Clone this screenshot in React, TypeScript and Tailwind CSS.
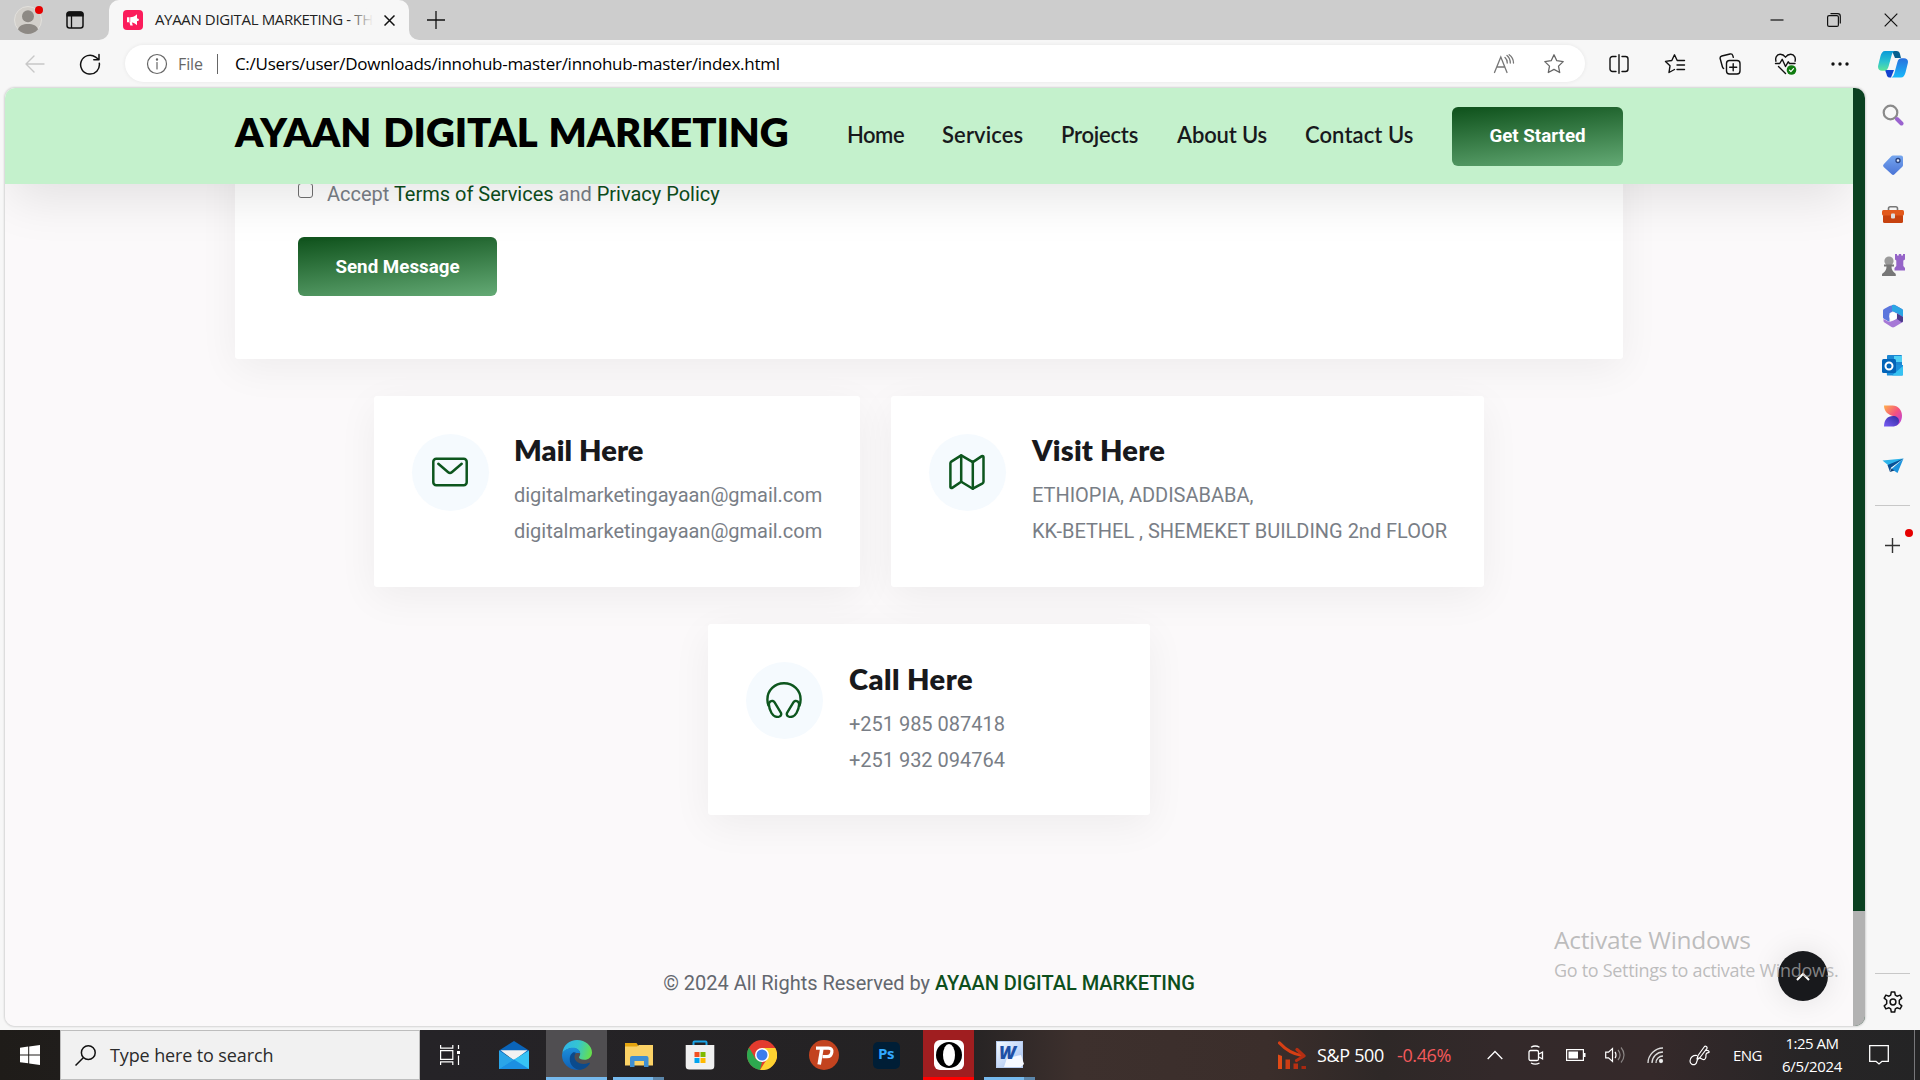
import type { ReactNode } from 'react';

function AvatarIcon() {
  return (
    <svg width="28" height="28" viewBox="0 0 28 28">
      <circle cx="14" cy="14" r="13.5" fill="#d2cfca" stroke="#e2e0dc" />
      <circle cx="14" cy="10.3" r="6" fill="#8d8984" />
      <path d="M4 23.5C5 19.5 9 18 14 18s9 1.500 10 5.500A14 14 0 0 1 14 28 14 14 0 0 1 4 23.500Z" fill="#8d8984" />
    </svg>
  );
}

function TabActionsIcon() {
  return (
    <svg width="20" height="20" viewBox="0 0 20 20">
      <rect x="2" y="2" width="16" height="16" rx="2.500" fill="none" stroke="#111" strokeWidth="1.500" />
      <path d="M1.500 6.500V4.500a3 3 0 0 1 3-3h11a3 3 0 0 1 3 3v2Z" fill="#111" />
      <path d="M6.500 6v12" stroke="#111" strokeWidth="1.300" />
    </svg>
  );
}

function FaviconIcon() {
  return (
    <svg width="20" height="20" viewBox="0 0 20 20">
      <rect width="20" height="20" rx="4" fill="#fb1c5b" />
      <path d="M4 7.200h2.500v5H4ZM7.200 7.200c2.800 0 4.800-1.200 6.800-3v4.200c1.500 0 1.900.6 1.900 1.300s-.4 1.300-1.900 1.300v4.200c-2-1.800-4-3-6.800-3Z" fill="#fff" />
      <path d="M6.500 12h2.300l1 3.500H7.300Z" fill="#fff" />
    </svg>
  );
}

function BackIcon() {
  return (
    <svg width="22" height="20" viewBox="0 0 22 20" fill="none" stroke="#c8c8c8" strokeWidth="1.400" strokeLinecap="round" strokeLinejoin="round">
      <path d="M20 10H2M10 2 2 10l8 8" />
    </svg>
  );
}

function ReloadIcon() {
  return (
    <svg width="22" height="22" viewBox="0 0 22 22" fill="none" stroke="#111" strokeWidth="1.500" strokeLinecap="round" strokeLinejoin="round">
      <path d="M20.300 10.200A9.400 9.400 0 1 1 16.600 4.100L19.800 6.500M20 1.500v5.200h-5.200" />
    </svg>
  );
}

function InfoIcon() {
  return (
    <svg width="22" height="22" viewBox="0 0 22 22" fill="none" stroke="#666" strokeWidth="1.200">
      <circle cx="11" cy="11" r="9.500" />
      <path d="M11 9.500v6.500" strokeLinecap="round" />
      <circle cx="11" cy="6.500" r=".6" fill="#666" />
    </svg>
  );
}

function ReadAloudIcon() {
  return (
    <svg width="22" height="20" viewBox="0 0 22 20" fill="none" stroke="#777" strokeWidth="1.300" strokeLinecap="round">
      <path d="M1.500 18.500 7.800 3l6.200 15.500M3.700 13h8.200M12 3.500a7 7 0 0 1 2.200 5.500M14 1.500c2.200 1.800 3.300 4.300 3.300 7.500M16.200.7C19 2.700 20.500 5.800 20.500 9" />
    </svg>
  );
}

const STAR = 'm11 1.800 2.800 5.900 6.400.9-4.700 4.500 1.200 6.400L11 16.400l-5.700 3.100 1.200-6.400L1.800 8.600l6.400-.9Z';

function StarIcon() {
  return (
    <svg width="22" height="22" viewBox="0 0 22 22" fill="none" stroke="#666" strokeWidth="1.300" strokeLinejoin="round">
      <path d={STAR} />
    </svg>
  );
}

function SplitIcon() {
  return (
    <svg width="20" height="20" viewBox="0 0 20 20" fill="none" stroke="#111" strokeWidth="1.400" strokeLinecap="round">
      <path d="M10 .7v18.600M7 2.500H3.500A2.500 2.500 0 0 0 1 5v10a2.500 2.500 0 0 0 2.500 2.500H7M13 2.500h3.500A2.500 2.500 0 0 1 19 5v10a2.500 2.500 0 0 1-2.500 2.500H13" />
    </svg>
  );
}

function FavoritesIcon() {
  return (
    <svg width="22" height="22" viewBox="0 0 22 22" fill="none" stroke="#111" strokeWidth="1.400" strokeLinecap="round" strokeLinejoin="round">
      <path d="M13.200 7.500 10.500 1.800 7.800 7.500l-6.300.9L6 12.800 5 19.500l5.500-3M13 12h7.500M13 16.500h7.500M13.200 7.500h7.300" />
    </svg>
  );
}

function CollectionsIcon() {
  return (
    <svg width="22" height="22" viewBox="0 0 22 22" fill="none" stroke="#111" strokeWidth="1.400" strokeLinecap="round" strokeLinejoin="round">
      <rect x="7.500" y="7.500" width="13.500" height="13.500" rx="3" />
      <path d="M14.200 10.700v7M10.700 14.200h7M4.600 15.500A3 3 0 0 1 3.400 13.800L1.200 5.800A2.300 2.300 0 0 1 2.800 3L11 1a2.300 2.300 0 0 1 2.800 1.600l.5 1.700" />
    </svg>
  );
}

function HealthIcon() {
  return (
    <svg width="24" height="24" viewBox="0 0 24 24" fill="none" stroke="#111" strokeWidth="1.400" strokeLinecap="round" strokeLinejoin="round">
      <path d="M2 9.200C1 6 2.500 2.300 6.300 2.300c2.700 0 4 1.300 5.200 2.900 1.200-1.600 2.500-2.900 5.200-2.900C20.500 2.300 22 6 21 9.200M4.500 14.500l7 7" />
      <path d="M1.500 11.500h4.200l2.500-4.200 3.300 7.200 2.700-4.700 1.300 1.700h5.500" />
      <circle cx="17.500" cy="18" r="4.800" fill="#107c10" stroke="none" />
      <path d="m15.500 18.200 1.400 1.400 2.600-3" stroke="#fff" strokeWidth="1.200" />
    </svg>
  );
}

function CopilotIcon() {
  return (
    <svg width="30" height="27" viewBox="0 0 30 27">
      <defs>
        <linearGradient id="cpA" x1="0" y1="0" x2="0" y2="1"><stop stopColor="#0a9ad8" /><stop offset=".55" stopColor="#2cc3d0" /><stop offset="1" stopColor="#5ee59a" /></linearGradient>
        <linearGradient id="cpB" x1="0" y1="0" x2="0" y2="1"><stop stopColor="#2870dd" /><stop offset="1" stopColor="#19b9fa" /></linearGradient>
      </defs>
      <path d="M14 0h4.500c2 0 3 1.200 3.500 3l1 4h-6Z" fill="#08618f" />
      <path d="M7 19h9l-3 7.500h-1.500C9.500 26.500 9 25 8.500 23Z" fill="#1243cf" />
      <path d="M7 0h9.500c-1.500.7-2.200 2-2.800 4l-3 11c-.8 3-2 4.800-4.500 4.800H4c-3 0-4.500-2.300-3.800-5.300L2.500 5C3.300 2 4.800 0 7 0Z" fill="url(#cpA)" />
      <path d="M23 26.500h-9.500c1.500-.7 2.200-2 2.800-4l3-11c.8-3 2-4.300 4.500-4.300H26c3 0 4.500 2 3.800 5L27.500 21.500c-.8 3-2.300 5-4.500 5Z" fill="url(#cpB)" />
    </svg>
  );
}

function SearchSide() {
  return (
    <svg width="22" height="22" viewBox="0 0 22 22" fill="none">
      <circle cx="8.500" cy="8.500" r="6.800" stroke="#8a8a8a" strokeWidth="2.200" />
      <path d="m15 15 4.500 4.500" stroke="#9a63cf" strokeWidth="4" strokeLinecap="round" />
    </svg>
  );
}

function TagSide() {
  return (
    <svg width="22" height="22" viewBox="0 0 22 22">
      <defs><linearGradient id="tg" x1="0" y1="0" x2="0" y2="1"><stop stopColor="#76a6ef" /><stop offset="1" stopColor="#4a74d6" /></linearGradient></defs>
      <path d="M11 1.500h8a2 2 0 0 1 2 2V11c0 .7-.2 1.200-.7 1.700l-7.800 7.600a2 2 0 0 1-2.800 0L1.700 13a2 2 0 0 1 0-2.800l7.600-8c.5-.5 1-.7 1.700-.7Z" fill="url(#tg)" />
      <circle cx="16" cy="6.500" r="2" fill="#dfe9fb" stroke="#29437f" strokeWidth="1.300" />
    </svg>
  );
}

function BriefcaseSide() {
  return (
    <svg width="22" height="20" viewBox="0 0 22 20">
      <path d="M6.500 6V3.500A1.800 1.800 0 0 1 8.300 1.700h5.400a1.800 1.800 0 0 1 1.800 1.800V6" fill="none" stroke="#777" strokeWidth="1.600" />
      <rect x="1" y="9" width="20" height="9" rx="1.500" fill="#c7420f" />
      <rect x="0" y="5" width="22" height="5.500" rx="1.500" fill="#e2591c" />
      <rect x="9" y="8.500" width="4" height="5" rx="1" fill="#ddd" />
    </svg>
  );
}

function GamesSide() {
  return (
    <svg width="24" height="24" viewBox="0 0 24 24">
      <path d="M14 1h2v1.500h1.800V1h2.400v1.500H22V1h2v5.500l-1.700 1V13l1.700 2v2.500H13.500V15l1.800-2V7.500L14 6.500Z" fill="#9564c8" />
      <circle cx="8" cy="8" r="4.600" fill="#9a9a9a" />
      <path d="M3 11.500h10v2h-2.500c0 2.800 1 4.800 3 6.200a2 2 0 0 1 1.300 1.800V23H1v-1.500a2 2 0 0 1 1.500-1.800c2-1.400 3-3.400 3-6.200H3Z" fill="#777" />
    </svg>
  );
}

function M365Side() {
  return (
    <svg width="22" height="24" viewBox="0 0 22 24">
      <path d="M7.500 2 12 .8c.7 0 1 .2 1.500.5L20 5c.8.500 1 1 1 1.800V13l-6-3.500-4-2.200-3.500 2V18L2.300 15C1.300 14.500 1 14 1 13V7c0-1 .2-1.500 1-2Z" fill="#5b76dd" />
      <path d="M10 1 12 .8 20 5c.8.500 1 1 1 1.800V13l-6-4-5-2Z" fill="#2ba6e4" />
      <path d="M1.500 15 7 18l4-1.200 4-2.300V9.500l6 3.500v3.500c0 1-.3 1.500-1 2l-7.500 4.500a3 3 0 0 1-3 0L2.500 18.500a2 2 0 0 1-1-1.500Z" fill="#a678d6" />
      <path d="M15 9.500 21 13v3.500c0 1-.3 1.500-1 2L15 15Z" fill="#4d3b8c" />
      <circle cx="11" cy="12.300" r="3.600" fill="#fff" />
    </svg>
  );
}

function OutlookSide() {
  return (
    <svg width="21" height="21" viewBox="0 0 21 21">
      <rect x="5" y="0" width="15" height="12" rx="1" fill="#1b87d2" />
      <rect x="12" y="1" width="8" height="6" fill="#4fd0f5" />
      <path d="M4 10h17v9.500a1 1 0 0 1-1 1H5Z" fill="#1a8fdb" />
      <path d="m21 11-11 9.500h10a1 1 0 0 0 1-1Z" fill="#36c2f2" />
      <rect x="0" y="4" width="14" height="14" rx="1.500" fill="#0364b8" />
      <circle cx="7" cy="11" r="3.500" fill="none" stroke="#fff" strokeWidth="2" />
    </svg>
  );
}

function DesignerSide() {
  return (
    <svg width="20" height="22" viewBox="0 0 20 22">
      <defs>
        <linearGradient id="dgA" x1="0" y1="0" x2="1" y2="1"><stop stopColor="#ffb04a" /><stop offset=".5" stopColor="#f4527f" /><stop offset="1" stopColor="#b03df0" /></linearGradient>
        <linearGradient id="dgB" x1="0" y1="1" x2="1" y2="0"><stop stopColor="#7a5cf5" /><stop offset="1" stopColor="#2f2aa0" /></linearGradient>
      </defs>
      <path d="M1 .5h8.500C15 .5 19 5 19 10.700S15.500 21 11 21L10 11C5.500 10 1 6.500 1 .5Z" fill="url(#dgA)" />
      <path d="M1 21.500C1 15 4.500 11 10 11c3.500 0 6 2 6 5s-2.500 5.500-6.500 5.500Z" fill="url(#dgB)" />
    </svg>
  );
}

function PlaneSide() {
  return (
    <svg width="22" height="16" viewBox="0 0 22 16">
      <path d="M.5 2.500 21.500.5 9 9.500Z" fill="#2cb3ea" />
      <path d="M21.500.5 15.500 15l-6-4Z" fill="#1c93dd" />
      <path d="m5.500 7 16-6.500L9 9.500l-1 4.500Z" fill="#0b4f93" />
      <path d="m8 14 1.500-3.500 3 2Z" fill="#0a3f78" />
    </svg>
  );
}

function GearIcon() {
  return (
    <svg width="22" height="22" viewBox="0 0 22 22" fill="none" stroke="#111" strokeWidth="1.500" strokeLinejoin="round">
      <path d="M9.300 1h3.400l.6 3.200 1.700 1 3.100-1.100 1.700 3-2.500 2.100v3.600l2.500 2.100-1.700 3-3.100-1.100-1.700 1-.6 3.200H9.300l-.6-3.200-1.700-1-3.100 1.100-1.700-3 2.500-2.100V9.200L2.200 7.100l1.700-3L7 5.200l1.700-1Z" />
      <circle cx="11" cy="11" r="2.900" />
    </svg>
  );
}

function SideSlot({ children }: { children: ReactNode }) {
  return <div className="flex h-[50.15px] items-center justify-center">{children}</div>;
}

function Sidebar() {
  return (
    <aside className="flex w-[55px] shrink-0 flex-col pt-[2px] pb-[17px]">
      <SideSlot><SearchSide /></SideSlot>
      <SideSlot><TagSide /></SideSlot>
      <SideSlot><BriefcaseSide /></SideSlot>
      <SideSlot><GamesSide /></SideSlot>
      <SideSlot><M365Side /></SideSlot>
      <SideSlot><OutlookSide /></SideSlot>
      <SideSlot><DesignerSide /></SideSlot>
      <SideSlot><PlaneSide /></SideSlot>
      <div className="mx-auto mt-[14px] h-px w-[35px] bg-[#c8c8c8]" />
      <div className="relative mx-auto mt-[32px]">
        <svg width="15" height="15" viewBox="0 0 15 15" stroke="#333" strokeWidth="1.400"><path d="M7.500 0v15M0 7.500h15" /></svg>
        <span className="absolute -top-[9px] left-[20px] size-2 rounded-full bg-[#e60000]" />
      </div>
      <div className="mx-auto mt-auto h-px w-[35px] bg-[#c8c8c8]" />
      <div className="mt-[17px] flex justify-center"><GearIcon /></div>
    </aside>
  );
}

function TabStrip() {
  return (
    <div className="flex h-10 shrink-0 items-center bg-[#cdcdcd]">
      <div className="relative ml-[14px] size-7">
        <AvatarIcon />
        <span className="absolute top-0 left-[21px] size-2 rounded-full bg-[#e60000]" />
      </div>
      <div className="ml-[23px]"><TabActionsIcon /></div>
      <div className="relative ml-[24px] flex h-10 w-[300px] items-center rounded-t-[10px] bg-[#f7f7f7] pl-[14px]">
        <svg className="absolute bottom-0 -left-[10px]" width="10" height="10" viewBox="0 0 10 10"><path d="M10 0v10H0A10 10 0 0 0 10 0Z" fill="#f7f7f7" /></svg>
        <svg className="absolute -right-[10px] bottom-0" width="10" height="10" viewBox="0 0 10 10"><path d="M0 0v10h10A10 10 0 0 1 0 0Z" fill="#f7f7f7" /></svg>
        <FaviconIcon />
        <div className="relative -mt-[2px] ml-[12px] w-[218px] text-[15px] tracking-[-0.36px] whitespace-nowrap text-[#222]">
          AYAAN DIGITAL MARKETING - TH
          <span className="absolute inset-y-0 right-0 w-[26px] bg-linear-to-r from-transparent to-[#f7f7f7]" />
        </div>
        <svg className="ml-[11px]" width="11" height="11" viewBox="0 0 11 11" stroke="#111" strokeWidth="1.500"><path d="m.5.5 10 10M10.500.5l-10 10" /></svg>
      </div>
      <svg className="ml-[18px]" width="18" height="18" viewBox="0 0 18 18" stroke="#111" strokeWidth="1.300"><path d="M9 0v18M0 9h18" /></svg>
      <div className="mr-[22px] ml-auto flex items-center gap-[43px]">
        <svg width="14" height="14" viewBox="0 0 14 14"><path d="M.5 7h13" stroke="#111" strokeWidth="1.200" /></svg>
        <svg width="14" height="14" viewBox="0 0 14 14" fill="none" stroke="#111" strokeWidth="1.200"><rect x=".6" y="2.600" width="10.800" height="10.800" rx="1.500" /><path d="M3.500.7h7.200a2.600 2.600 0 0 1 2.600 2.600v7.200" /></svg>
        <svg width="14" height="14" viewBox="0 0 14 14"><path d="m.7.700 12.600 12.600M13.300.7.7 13.300" stroke="#111" strokeWidth="1.200" /></svg>
      </div>
    </div>
  );
}

function Toolbar() {
  return (
    <div className="flex h-12 shrink-0 items-center">
      <div className="ml-[24px]"><BackIcon /></div>
      <div className="ml-[33px]"><ReloadIcon /></div>
      <div className="-mt-px ml-[24px] flex h-[37px] w-[1460px] items-center rounded-full bg-white pl-[21px] shadow-[0_0_4px_rgba(0,0,0,0.07)]">
        <InfoIcon />
        <span className="ml-[10px] text-[16px] tracking-[-0.1px] text-[#666]">File</span>
        <span className="ml-[14px] h-5 w-px bg-[#666]" />
        <span className="ml-[17px] text-[17px] tracking-[-0.265px] whitespace-nowrap text-black">C:/Users/user/Downloads/innohub-master/innohub-master/index.html</span>
        <div className="mr-[20px] ml-auto flex items-center gap-[28px]"><ReadAloudIcon /><StarIcon /></div>
      </div>
      <div className="ml-[24px] flex flex-1 items-center">
        <SplitIcon />
        <div className="ml-[35px]"><FavoritesIcon /></div>
        <div className="ml-[33px]"><CollectionsIcon /></div>
        <div className="ml-[33px]"><HealthIcon /></div>
        <svg className="ml-[33px]" width="18" height="4" viewBox="0 0 18 4" fill="#111"><circle cx="2" cy="2" r="1.700" /><circle cx="9" cy="2" r="1.700" /><circle cx="16" cy="2" r="1.700" /></svg>
        <div className="ml-[29px]"><CopilotIcon /></div>
      </div>
    </div>
  );
}

function SiteHeader() {
  return (
    <header className="relative z-10 flex h-24 items-center bg-[#c4f1cc] pl-[230px] shadow-[0_20px_50px_-6px_rgba(10,5,10,0.1)]">
      <h1 className="-mt-[9px] w-[552px] text-[40px] leading-[48px] font-extrabold tracking-[-0.13px] whitespace-nowrap text-black [word-spacing:3px]">AYAAN DIGITAL MARKETING</h1>
      <nav className="-mt-[3px] ml-[60px] flex text-[22px] leading-7 font-semibold whitespace-nowrap text-[#18191c]">
        <a className="w-[95px] tracking-[-0.5px]">Home</a>
        <a className="w-[119px] tracking-[0.12px]">Services</a>
        <a className="w-[116px] tracking-[-0.23px]">Projects</a>
        <a className="w-[128px] tracking-[-0.16px]">About Us</a>
        <a className="w-[147px] tracking-[0.08px]">Contact Us</a>
      </nav>
      <GreenButton className="w-[171px]">Get Started</GreenButton>
    </header>
  );
}

function GreenButton({ className, children }: { className: string; children: ReactNode }) {
  return (
    <button className={`flex h-[59px] items-center justify-center rounded-md bg-[linear-gradient(174deg,#12551f_5%,#62a873_98%)] font-['Roboto',sans-serif] text-[18.75px] font-bold whitespace-nowrap text-white ${className}`}>
      {children}
    </button>
  );
}

function MailIcon() {
  return (
    <svg className="-mt-px -ml-px" width="36" height="36" viewBox="0 0 36 36" fill="none" stroke="#0d561e" strokeWidth="2.500" strokeLinecap="round" strokeLinejoin="round">
      <rect x="1.300" y="4.800" width="33.400" height="26.400" rx="3" />
      <path d="m6.300 9.800 9.900 8.400a2.800 2.800 0 0 0 3.600 0l9.900-8.400" />
    </svg>
  );
}

function MapIcon() {
  return (
    <svg className="-mt-px -ml-px" width="36" height="36" viewBox="0 0 36 36" fill="none" stroke="#0d561e" strokeWidth="2.500" strokeLinecap="round" strokeLinejoin="round">
      <path d="M1.400 9.300a2 2 0 0 1 .9-1.700L12.200 1.400l11.600 6.700L32.800 2.100c.8-.5 1.700 0 1.700.9v24.700a2 2 0 0 1-.9 1.600L23.800 34.700 12.200 27.800 3.200 33.900c-.8.500-1.800 0-1.800-.9Z" />
      <path d="M12.200 1.400v26.400M23.800 8.100v26.600" />
    </svg>
  );
}

function HeadphonesIcon() {
  return (
    <svg className="-mt-px -ml-[2px]" width="36" height="36" viewBox="0 0 36 36" fill="none" stroke="#0d561e" strokeWidth="2.400" strokeLinecap="round" strokeLinejoin="round">
      <path d="M2.500 23.500A17 17 0 0 1 1.400 17.500C1.400 8.300 8.700 1.300 18 1.300s16.600 7 16.600 16.200c0 2-.4 4-1.100 6" />
      <path d="M4.400 19.400c1.600-1 3.300-.5 4.200 1l6.200 10.200c.9 1.500.3 3.200-1.300 3.900-3 1.200-6.200-.4-8-3.500-1.700-2.900-2.500-5.500-2.600-8.500 0-1.300.5-2.500 1.500-3.100ZM31.600 19.400c-1.600-1-3.300-.5-4.200 1l-6.200 10.200c-.9 1.500-.3 3.200 1.300 3.900 3 1.200 6.200-.4 8-3.500 1.700-2.900 2.500-5.500 2.600-8.500 0-1.300-.5-2.500-1.500-3.100Z" />
    </svg>
  );
}

interface ContactCardProps {
  icon: ReactNode;
  title: string;
  lines: string[];
  className: string;
  bodyClassName: string;
}

function ContactCard({ icon, title, lines, className, bodyClassName }: ContactCardProps) {
  return (
    <div className={`flex h-[191px] rounded-[3px] bg-white pt-[38px] pl-[38px] shadow-[0_10px_40px_rgba(10,5,10,0.055)] ${className}`}>
      <div className="flex size-[77px] shrink-0 items-center justify-center rounded-full bg-[#f5fafe]">{icon}</div>
      <div className={bodyClassName}>
        <h3 className="text-[29px] leading-9 font-extrabold whitespace-nowrap text-[#18191c]">{title}</h3>
        <div className="mt-[9px] font-['Roboto',sans-serif] text-[20px] leading-9 tracking-[-0.02px] whitespace-nowrap text-[#797e86]">
          {lines.map((line, i) => <p key={i}>{line}</p>)}
        </div>
      </div>
    </div>
  );
}

function Page() {
  return (
    <div className="relative flex min-w-0 flex-1 flex-col overflow-hidden bg-[#fbf9fa] font-['Lato',sans-serif]">
      <SiteHeader />
      <main className="flex flex-col">
        <section className="-mt-10 ml-[230px] flex h-[215px] w-[1388px] flex-col items-start rounded-[3px] bg-white pt-[32px] pl-[63px] shadow-[0_10px_40px_rgba(10,5,10,0.055)]">
          <div className="flex">
            <span className="mt-[7px] size-[15px] rounded-[3px] border border-[#707070] bg-white" />
            <p className="ml-[14px] font-['Roboto',sans-serif] text-[20px] leading-9 tracking-[-0.01px] text-[#797e86]">
              Accept <span className="text-[#0d4f1c]">Terms of Services</span> and <span className="text-[#0d4f1c]">Privacy Policy</span>
            </p>
          </div>
          <GreenButton className="mt-[25px] w-[199px] pt-px">Send Message</GreenButton>
        </section>
        <div className="mt-[37px] ml-[369px] flex gap-[31px]">
          <ContactCard className="w-[486px]" bodyClassName="-mt-[2px] ml-[25px] [&_h3]:tracking-[0.1px]" icon={<MailIcon />} title="Mail Here" lines={['digitalmarketingayaan@gmail.com', 'digitalmarketingayaan@gmail.com']} />
          <ContactCard className="w-[593px]" bodyClassName="-mt-[2px] ml-[26px] [&_h3]:tracking-[0.2px]" icon={<MapIcon />} title="Visit Here" lines={['ETHIOPIA, ADDISABABA,', 'KK-BETHEL , SHEMEKET BUILDING 2nd FLOOR']} />
        </div>
        <ContactCard className="mt-[37px] ml-[703px] w-[442px]" bodyClassName="-mt-px ml-[26px] [&_h3]:tracking-[0.45px]" icon={<HeadphonesIcon />} title="Call Here" lines={['+251 985 087418', '+251 932 094764']} />
      </main>
      <footer className="mt-[150px] text-center font-['Roboto',sans-serif] text-[20px] leading-9 tracking-[-0.02px] text-[#63676e]">
        © 2024 All Rights Reserved by <span className="font-medium text-[#0d4f1c]">AYAAN DIGITAL MARKETING</span>
      </footer>
      <div className="absolute right-[25px] bottom-[25px] flex size-[50px] items-center justify-center rounded-full bg-[#18191c] shadow-[0_0_30px_rgba(0,0,0,0.1)]">
        <svg width="14" height="9" viewBox="0 0 14 9" fill="none" stroke="#fff" strokeWidth="2"><path d="m1 8 6-6 6 6" /></svg>
      </div>
      <div className="absolute top-[834px] left-[1549px] font-['Open_Sans','Noto_Sans',sans-serif] whitespace-nowrap text-[#a8a8a8]/75">
        <p className="text-[24.5px] leading-9 tracking-[-0.28px]">Activate Windows</p>
        <p className="text-[18px] leading-[24px] tracking-[-0.3px]">Go to Settings to activate Windows.</p>
      </div>
    </div>
  );
}

function TaskSlot({ children, className }: { children: ReactNode; className: string }) {
  return <div className={`flex h-full shrink-0 items-center justify-center ${className}`}>{children}</div>;
}

function Underline({ split }: { split?: boolean }) {
  return (
    <span className="absolute inset-x-0 bottom-0 flex h-[3px] bg-[#76b9ed]">
      {split && <span className="ml-auto w-[11px] bg-[#5b86aa]" />}
    </span>
  );
}

function Taskbar() {
  return (
    <div className="flex h-[50px] shrink-0 items-center bg-[linear-gradient(90deg,#1f1c19_0%,#252327_22%,#242223_50%,#3d302d_56%,#3b2e2b_66%,#2e2827_72%,#33292a_78%,#35292a_86%,#272526_94%,#242425_100%)]">
      <TaskSlot className="w-[60px]">
        <svg width="20" height="20" viewBox="0 0 20 20" fill="#fff"><path d="M0 2.700 8.200 1.600v7.800H0ZM9.200 1.500 20 0v9.400H9.200ZM0 10.400h8.200v7.900L0 17.200ZM9.200 10.400H20v9.600l-10.800-1.500Z" /></svg>
      </TaskSlot>
      <div className="flex h-full w-[360px] shrink-0 items-center border border-[#bdbdbd] bg-[#f1f1f1] pl-[14px]">
        <svg width="21" height="21" viewBox="0 0 21 21" fill="none" stroke="#111" strokeWidth="1.500"><circle cx="13.300" cy="7.700" r="6.900" /><path d="M8.300 12.700.5 20.500" /></svg>
        <span className="ml-[14px] text-[18px] tracking-[-0.12px] text-[#2b2b2b]">Type here to search</span>
      </div>
      <TaskSlot className="w-[61px]">
        <svg width="21" height="20" viewBox="0 0 21 20" fill="none" stroke="#fff" strokeWidth="1.200"><path d="M.6 0v3.200h12.200V0M.6 20v-3.200h12.200V20M.6 5.600h12.200v8.800H.6ZM18.500 0v4M18.500 10.500V20" /><path d="M17 6h3v3h-3Z" fill="#fff" stroke="none" /></svg>
      </TaskSlot>
      <TaskSlot className="w-[65px]">
        <svg width="30" height="28" viewBox="0 0 30 28"><path d="M0 9.500 15 0l15 9.500v4H0Z" fill="#0a64b8" /><path d="M1.500 9.200h27L15 19.500Z" fill="#f2f2f2" /><path d="M0 9.500 15 19v9H0Z" fill="#2aa5e8" /><path d="m30 9.500-15 9L0 28h30Z" fill="#36c3f5" /><path d="M0 28 15 18.500 30 28Z" fill="#1b8fe2" /></svg>
      </TaskSlot>
      <TaskSlot className="relative w-[61px] bg-[#504e51]">
        <svg width="30" height="30" viewBox="0 0 30 30">
          <defs>
            <linearGradient id="edA" x1="0" y1=".3" x2="1" y2=".5"><stop stopColor="#2fb4ea" /><stop offset=".5" stopColor="#35c5d0" /><stop offset="1" stopColor="#66e04c" /></linearGradient>
            <linearGradient id="edB" x1="0" y1="0" x2="0" y2="1"><stop stopColor="#1c8fdb" /><stop offset="1" stopColor="#0f5fb5" /></linearGradient>
          </defs>
          <path d="M.3 13C1.500 5 7.500 0 15 0c8.500 0 15 6 15 12.500 0 4.500-3.500 7.300-7.500 7.300-3.500 0-5.500-1.300-5.500-2.300s1.200-1.500 1.200-3.700C18.200 10.500 15 8 11 8 6.500 8 2.500 10 .3 13Z" fill="url(#edA)" />
          <path d="M.2 13.500C2 10 6.500 7.800 11 7.800c4.200 0 7 2.700 7.200 5.500-5-1.500-8.500 1.500-8.500 5.500 0 5 3.500 9 7.500 11C7.500 31 0 23.500 0 15.500Z" fill="url(#edB)" />
          <path d="M11 12.500c-2 1.300-3.300 3.500-3.300 6.500 0 6 5 10.500 9.500 10.800 4.500 0 8.500-2.800 10.600-6.300.4-.6-.2-1-.8-.7-6.500 3-14.500.2-14.500-6 0-1.500.5-2.800 1.500-4-1-.7-2-.9-3-.3Z" fill="#0b4a8c" />
        </svg>
        <Underline />
      </TaskSlot>
      <TaskSlot className="relative ml-[6px] w-[51px]">
        <svg width="28" height="24" viewBox="0 0 28 24"><path d="M0 0h11.500l2 3v6H0Z" fill="#e5a50f" /><path d="M0 3.500h12l2-1.500h14v20.500H0Z" fill="#fbd266" /><path d="M5 24V15a2 2 0 0 1 2-2h14.500a2 2 0 0 1 2 2v9H19v-6h-9.500v6Z" fill="#3f8fd2" /></svg>
        <Underline split />
      </TaskSlot>
      <TaskSlot className="ml-[7px] w-[58px]">
        <svg width="30" height="30" viewBox="0 0 30 30"><path d="M8.500 6V2.500A1 1 0 0 1 9.500 1.500h11a1 1 0 0 1 1 1V6" fill="none" stroke="#1aa5e8" strokeWidth="2" /><path d="M.7 5h28.600v21a3.500 3.500 0 0 1-3.500 3.500H4.200A3.500 3.500 0 0 1 .7 26Z" fill="#f0f0f0" /><path d="M9.500 12h5v5h-5Z" fill="#f25022" /><path d="M15.500 12h5v5h-5Z" fill="#7fba00" /><path d="M9.500 18h5v5h-5Z" fill="#00a4ef" /><path d="M15.500 18h5v5h-5Z" fill="#ffb900" /></svg>
      </TaskSlot>
      <TaskSlot className="w-[66px]">
        <svg width="30" height="30" viewBox="0 0 30 30"><circle cx="15" cy="15" r="15" fill="#e33b2e" /><path d="M2 7.500 8.500 18.700 15 22l-2 7.900A15 15 0 0 1 2 7.500Z" fill="#2da94f" /><path d="M15 8h13.300a15 15 0 0 1-15.300 21.900l6.800-10.500Z" fill="#fdd231" /><circle cx="15" cy="15" r="7" fill="#fff" /><circle cx="15" cy="15" r="5.500" fill="#3b7ded" /></svg>
      </TaskSlot>
      <TaskSlot className="w-[58px]">
        <svg width="30" height="30" viewBox="0 0 30 30">
          <circle cx="15" cy="15" r="15" fill="#c3431f" />
          <path d="M7 8.200h12.500c3 0 3.800 1.600 3.300 4.200-.5 2.800-2 4.200-4.800 4.200h-4.500" fill="none" stroke="#fff" strokeWidth="3.200" strokeLinejoin="round" />
          <path d="M12.800 9 10.200 24.500" stroke="#fff" strokeWidth="3.600" />
        </svg>
      </TaskSlot>
      <TaskSlot className="w-[66px]">
        <div className="flex size-[27px] items-center justify-center rounded-[5px] bg-[#001e36] pb-[3px] font-['Open_Sans',sans-serif] text-[15px] font-bold tracking-[-0.5px] text-[#31a8ff]">Ps</div>
      </TaskSlot>
      <TaskSlot className="relative ml-[4px] w-[51px] bg-[#a01e20]">
        <svg width="30" height="30" viewBox="0 0 30 30"><rect width="30" height="30" rx="6" fill="#fff" /><circle cx="15" cy="15" r="13" fill="#000" /><ellipse cx="15" cy="15" rx="6" ry="11" fill="#fff" /></svg>
        <span className="absolute inset-x-0 bottom-0 h-[3px] bg-[#ff0000]" />
      </TaskSlot>
      <TaskSlot className="relative ml-[10px] w-[51px]">
        <div className="relative mr-px mb-[2px] flex h-[27px] w-[27px] justify-center border border-[#b8cdf0] bg-linear-to-br from-[#f4f9ff] to-[#9fbdf0]">
          <svg className="absolute -right-[2px] bottom-0" width="20" height="12" viewBox="0 0 20 12"><path d="M0 12 3 3l14-3 3 9-3 3Z" fill="#f6f9ff" /></svg>
          <span className="relative -mt-[2px] ml-[-3px] font-['Open_Sans',sans-serif] text-[18px] leading-[25px] font-extrabold text-[#1e4fa5] italic">W</span>
        </div>
        <Underline split />
      </TaskSlot>
      <div className="ml-auto flex h-full shrink-0 items-center text-white">
        <svg width="28" height="28" viewBox="0 0 28 28" fill="none"><path d="M1.500 2C8 9 14 13 24 14.500" stroke="#d63f14" strokeWidth="3.200" strokeLinecap="round" /><path d="M19 8.500 26 15l-7.500 4.500" stroke="#b52e12" strokeWidth="3.200" strokeLinecap="round" strokeLinejoin="round" /><path d="M0 13.500 4 15v13H0Z" fill="#e04a16" /><path d="M7.500 18.500H12V28H7.500Z" fill="#cc3d14" /><path d="M15.500 22.500H20V28h-4.500Z" fill="#b93012" /><path d="M23.500 25H28v3h-4.500Z" fill="#a82810" /></svg>
        <span className="ml-[11px] w-[80px] text-[18px] tracking-[-0.338px]">S&amp;P 500</span>
        <span className="w-[90px] text-[18px] tracking-[-0.379px] text-[#f4595b]">-0.46%</span>
        <svg width="16" height="10" viewBox="0 0 16 10" fill="none" stroke="#fff" strokeWidth="1.300"><path d="m.7 9 7.300-7.500L15.300 9" /></svg>
        <svg className="ml-[25px]" width="16" height="20" viewBox="0 0 16 20" fill="none" stroke="#fff" strokeWidth="1.300"><rect x="1" y="5.500" width="9.500" height="10" rx="1.500" /><path d="m11 9 3.500-2v7L11 12M3 2.200C5.500.8 9 .8 11.500 2.200M3 18c2.500 1.300 6 1.300 8.500 0" /></svg>
        <svg className="ml-[22px]" width="20" height="12" viewBox="0 0 20 12"><rect x=".6" y=".6" width="16.800" height="10.800" fill="none" stroke="#fff" strokeWidth="1.200" /><path d="M2.500 2.500H12v7H2.500ZM18 4h1.500v4H18Z" fill="#fff" /></svg>
        <svg className="ml-[19px]" width="21" height="18" viewBox="0 0 21 18" fill="none" stroke="#fff" strokeWidth="1.200"><path d="M.7 6.200h2.800L7.500 2.500v13L3.500 11.800H.7Z" /><path d="M10 6c1.300 1.500 1.300 4.500 0 6" /><path d="M13 4c2.500 3 2.500 7 0 10M16 1.500c4 4.500 4 10.500 0 15" stroke="#8a8584" /></svg>
        <svg className="ml-[21px]" width="17" height="17" viewBox="0 0 17 17" fill="none" stroke="#ddd" strokeWidth="1.300"><path d="M1 16C1 8 8 1 16 1M5 16C5 10 10 5 16 5M9 16c0-4 3-7 7-7" /><circle cx="14" cy="14" r="1.500" fill="#fff" /></svg>
        <svg className="ml-[25px]" width="21" height="21" viewBox="0 0 21 21" fill="none" stroke="#fff" strokeWidth="1.200" strokeLinejoin="round"><path d="m8 14 1-3.500L15.500 1.500c1-1 3 .3 2.500 1.800L11 12.500ZM8 10.500C4 10 1 12.500 1 16s3.500 4.500 5.500 3 .5-3.500 3-5.500 4.500 3 6.500.5 0-4 1.500-5.500 3 0 2.500-2-2.500-1-4-1" /></svg>
        <span className="ml-[23px] text-[15px] tracking-[-0.512px]">ENG</span>
        <div className="ml-[20px] flex w-[60px] flex-col items-center text-[15px] leading-[23px] whitespace-nowrap">
          <span className="tracking-[-0.5px]">1:25 AM</span>
          <span className="tracking-[-0.308px]">6/5/2024</span>
        </div>
        <svg className="ml-[27px]" width="20" height="20" viewBox="0 0 20 20" fill="none" stroke="#fff" strokeWidth="1.300"><path d="M.7.700h18.600v15.600H13L10 19l-3-2.700H.7Z" /></svg>
        <span className="ml-[25px] h-full w-px bg-[#77777a]" />
        <span className="w-[5px]" />
      </div>
    </div>
  );
}

export default function App() {
  return (
    <div className="flex h-[1080px] w-[1920px] flex-col overflow-hidden bg-[#f7f7f7] font-['Open_Sans','Noto_Sans',sans-serif]">
      <TabStrip />
      <Toolbar />
      <div className="flex min-h-0 flex-1">
        <div className="mb-1 ml-[5px] flex w-[1860px] shrink-0 overflow-hidden rounded-[10px] shadow-[0_0_2px_1px_rgba(0,0,0,0.14)]">
          <Page />
          <div className="flex w-3 shrink-0 flex-col bg-[#0b4121]">
            <div className="mt-[823px] flex-1 bg-[#b2b2b2]" />
          </div>
        </div>
        <Sidebar />
      </div>
      <Taskbar />
    </div>
  );
}
